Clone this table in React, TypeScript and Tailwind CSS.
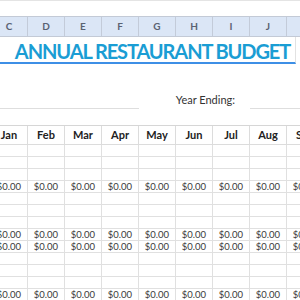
const COLS = ['C', 'D', 'E', 'F', 'G', 'H', 'I', 'J', 'K']
const MONTHS = ['Jan', 'Feb', 'Mar', 'Apr', 'May', 'Jun', 'Jul', 'Aug', 'Sep']

// which body rows hold $0.00 values
const ROWS = [false, false, false, true, false, false, false, true, true, false, false, false, true]

export default function App() {
  return (
    <div className="w-[300px] h-[300px] overflow-hidden bg-white font-['Lato','Liberation_Sans',sans-serif]">
      <div className="ml-[-9px] w-[333px]">
        {/* formula bar edge */}
        <div className="h-[16px] border-t border-[#e4e4e4]" />

        {/* column letters */}
        <div className="grid grid-cols-[repeat(9,37px)] h-[21px] bg-[#dbe6f6] border-t border-b border-[#c3cad6]">
          {COLS.map((c) => (
            <div
              key={c}
              className="flex items-center justify-center border-r border-[#c3cbd9] text-[10px] font-bold text-[#5a6272]"
            >
              {c}
            </div>
          ))}
        </div>

        {/* title */}
        <div className="w-[305px] h-[27px] flex items-center justify-center pl-[19px] pt-[2px] border-b-2 border-r border-b-[#3d8fe6] border-r-[#e2e2e2]">
          <span className="whitespace-nowrap text-[20px] leading-none font-bold tracking-[-1.1px] text-[#1a9dd4]">
            ANNUAL RESTAURANT BUDGET
          </span>
        </div>

        {/* name / year ending */}
        <div className="grid grid-cols-[repeat(9,37px)] h-[45px]">
          <div className="col-span-4 border-b border-[#dedede]" />
          <div className="col-span-3 flex items-end justify-end pr-[15px] pb-[1px] text-[11px] text-[#333]">
            Year Ending:
          </div>
          <div className="col-span-2 border-b border-[#dedede]" />
        </div>

        <div className="h-[16px]" />

        {/* month table */}
        <div className="border-t border-[#d6d6d6]">
          <div className="grid grid-cols-[repeat(9,37px)] h-[19px]">
            {MONTHS.map((m) => (
              <div
                key={m}
                className="flex items-center justify-center border-r border-b border-[#dcdcdc] text-[11px] font-bold text-[#222]"
              >
                {m}
              </div>
            ))}
          </div>
          {ROWS.map((money, i) => (
            <div key={i} className="grid grid-cols-[repeat(9,37px)] h-[12px]">
              {MONTHS.map((m) => (
                <div
                  key={m}
                  className="flex items-center justify-center border-r border-b border-[#e0e0e0] text-[9.5px] leading-none text-[#3a3a3a]"
                >
                  {money ? '$0.00' : ''}
                </div>
              ))}
            </div>
          ))}
        </div>
      </div>
    </div>
  )
}
